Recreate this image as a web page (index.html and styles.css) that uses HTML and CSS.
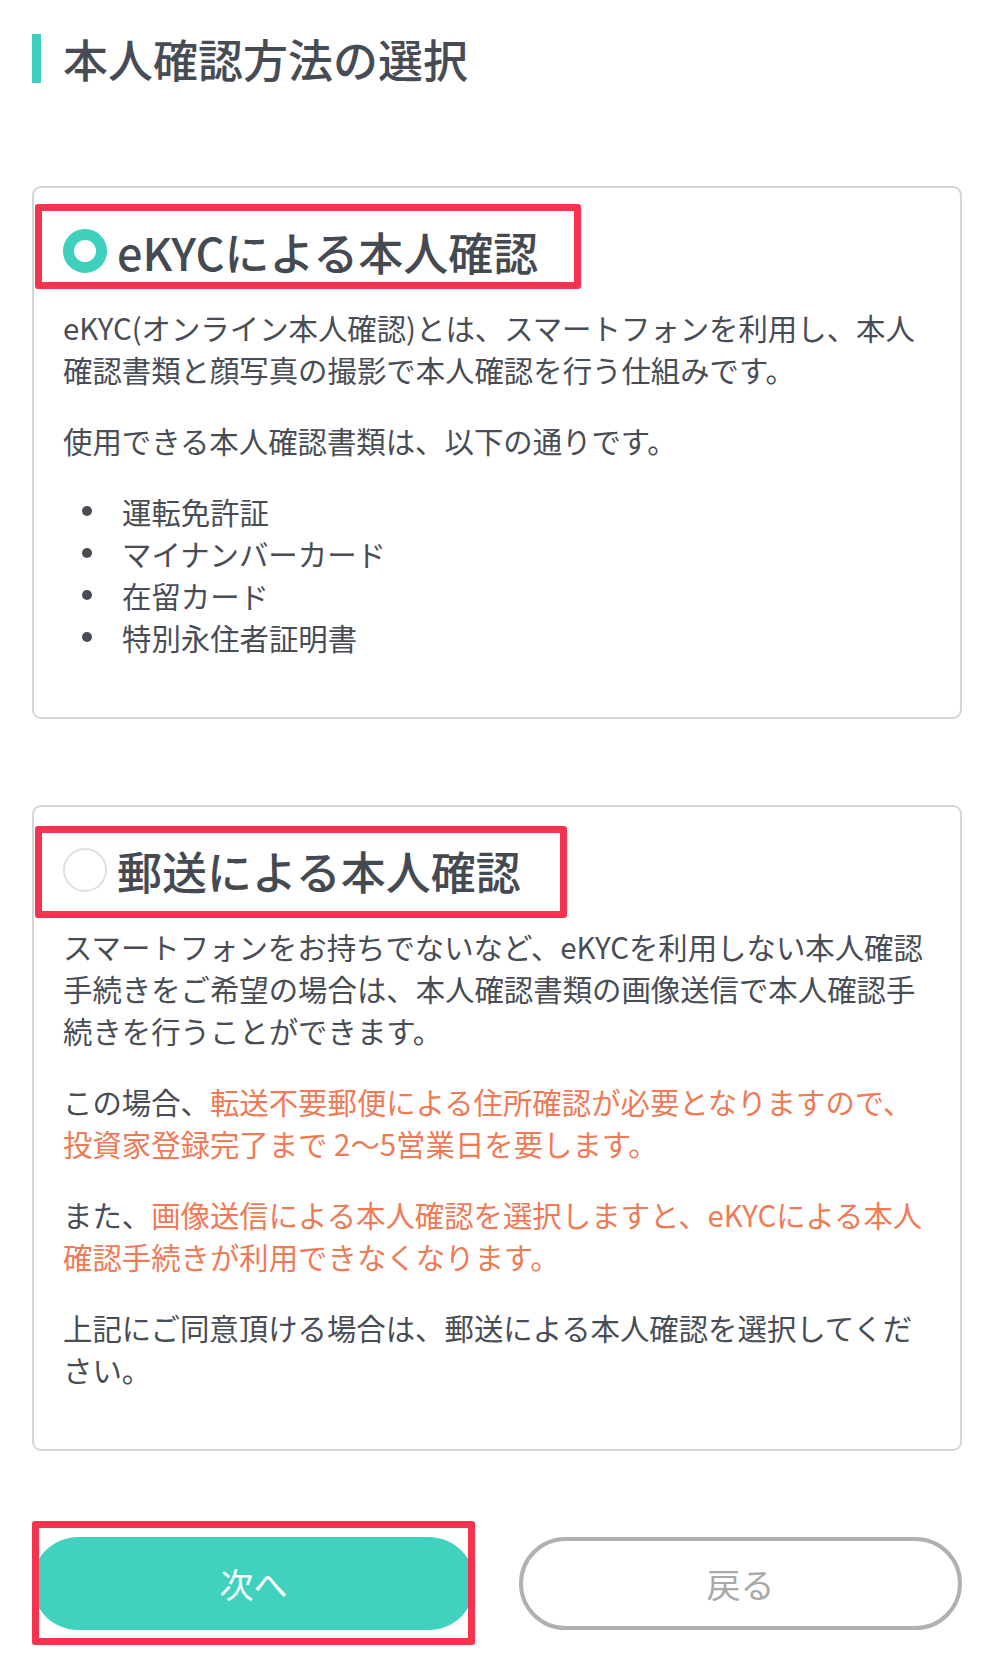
FILE: index.html
```html
<!DOCTYPE html>
<html lang="ja">
<head>
  <meta charset="UTF-8" />
  <meta name="viewport" content="width=device-width, initial-scale=1.0"/>
  <title>本人確認方法の選択</title>
  <link rel="stylesheet" href="styles.css">
</head>
<body>

  <h1 class="page-title">本人確認方法の選択</h1>

  <!-- eKYC -->
  <div class="pick-card">
    <div class="pick-head">
      <span class="radio checked"></span>
      <span class="pick-name">eKYCによる本人確認</span>
      <span class="mark mark-ekyc"></span>
    </div>
    <p>eKYC(オンライン本人確認)とは、スマートフォンを利用し、本人確認書類と顔写真の撮影で本人確認を行う仕組みです。</p>
    <p>使用できる本人確認書類は、以下の通りです。</p>
    <ul class="doc-list">
      <li>運転免許証</li>
      <li>マイナンバーカード</li>
      <li>在留カード</li>
      <li>特別永住者証明書</li>
    </ul>
  </div>

  <!-- 郵送 -->
  <div class="pick-card">
    <div class="pick-head">
      <span class="radio"></span>
      <span class="pick-name">郵送による本人確認</span>
      <span class="mark mark-post"></span>
    </div>
    <p>スマートフォンをお持ちでないなど、eKYCを利用しない本人確認手続きをご希望の場合は、本人確認書類の画像送信で本人確認手続きを行うことができます。</p>
    <p>この場合、<span class="warn">転送不要郵便による住所確認が必要となりますので、投資家登録完了まで 2〜5営業日を要します。</span></p>
    <p>また、<span class="warn">画像送信による本人確認を選択しますと、eKYCによる本人確認手続きが利用できなくなります。</span></p>
    <p>上記にご同意頂ける場合は、郵送による本人確認を選択してください。</p>
  </div>

  <div class="actions">
    <div class="btn-slot">
      <button class="btn btn-next">次へ</button>
      <span class="mark mark-btn"></span>
    </div>
    <div class="btn-slot">
      <button class="btn btn-back">戻る</button>
    </div>
  </div>

</body>
</html>
```

FILE: styles.css
```css
body {
  margin: 0;
  padding: 34px 24px 29px 32px;
  background: #fff;
  font-family: "Noto Sans CJK JP", "Noto Sans", sans-serif;
  color: #484d55;
}

.page-title {
  display: flex;
  align-items: center;
  margin: 0 0 103px;
  font-size: 45px;
  font-weight: 500;
  line-height: 49px;
  color: #474c54;
}

.page-title::before {
  content: "";
  width: 9px;
  height: 49px;
  margin-right: 22px;
  background: #3fd0bd;
}

.pick-card {
  border: 2px solid #d6d6d6;
  border-radius: 9px;
  padding: 35px 29px 30px;
  margin-bottom: 86px;
}

.pick-card p {
  margin: 0 0 29px;
  font-size: 29.4px;
  line-height: 42px;
}

.pick-head {
  position: relative;
  display: flex;
  align-items: center;
  height: 56px;
  margin-bottom: 27px;
}

.pick-name {
  margin-left: 10px;
  font-size: 45px;
  font-weight: 500;
  color: #454a52;
}

.radio {
  box-sizing: border-box;
  width: 44px;
  height: 44px;
  border-radius: 50%;
  border: 2px solid #e0e0e0;
  background: #fff;
}

.radio.checked {
  border: 11px solid #3fd0bd;
}

/* red annotation frames */
.mark {
  position: absolute;
  box-sizing: border-box;
  border: 7px solid #f5334f;
  border-radius: 3px;
  pointer-events: none;
}

.mark-ekyc {
  left: -28px;
  top: -19px;
  width: 546px;
  height: 85px;
}

.mark-post {
  left: -28px;
  top: -16px;
  width: 532px;
  height: 92px;
}

.mark-btn {
  left: 0;
  right: 0;
  top: -16px;
  bottom: -15px;
}

.warn {
  color: #f07a55;
}

.doc-list {
  list-style: none;
  margin: 29px 0 29px;
  padding: 0;
}

.doc-list li {
  display: flex;
  align-items: center;
  font-size: 29.4px;
  line-height: 42px;
}

.doc-list li::before {
  content: "";
  width: 10px;
  height: 10px;
  border-radius: 50%;
  background: #484d55;
  margin: 0 30px 0 19px;
}

.actions {
  display: flex;
  gap: 44px;
}

.btn-slot {
  position: relative;
  flex: 1;
}

.btn {
  display: block;
  width: 100%;
  height: 93px;
  border-radius: 47px;
  font-family: inherit;
  font-size: 34px;
  line-height: 1;
  cursor: pointer;
}

.btn-next {
  background: #40d1bf;
  border: none;
  color: #fff;
}

.btn-back {
  background: #fff;
  border: 4px solid #b1b1b1;
  color: #a9a9a9;
}
```
